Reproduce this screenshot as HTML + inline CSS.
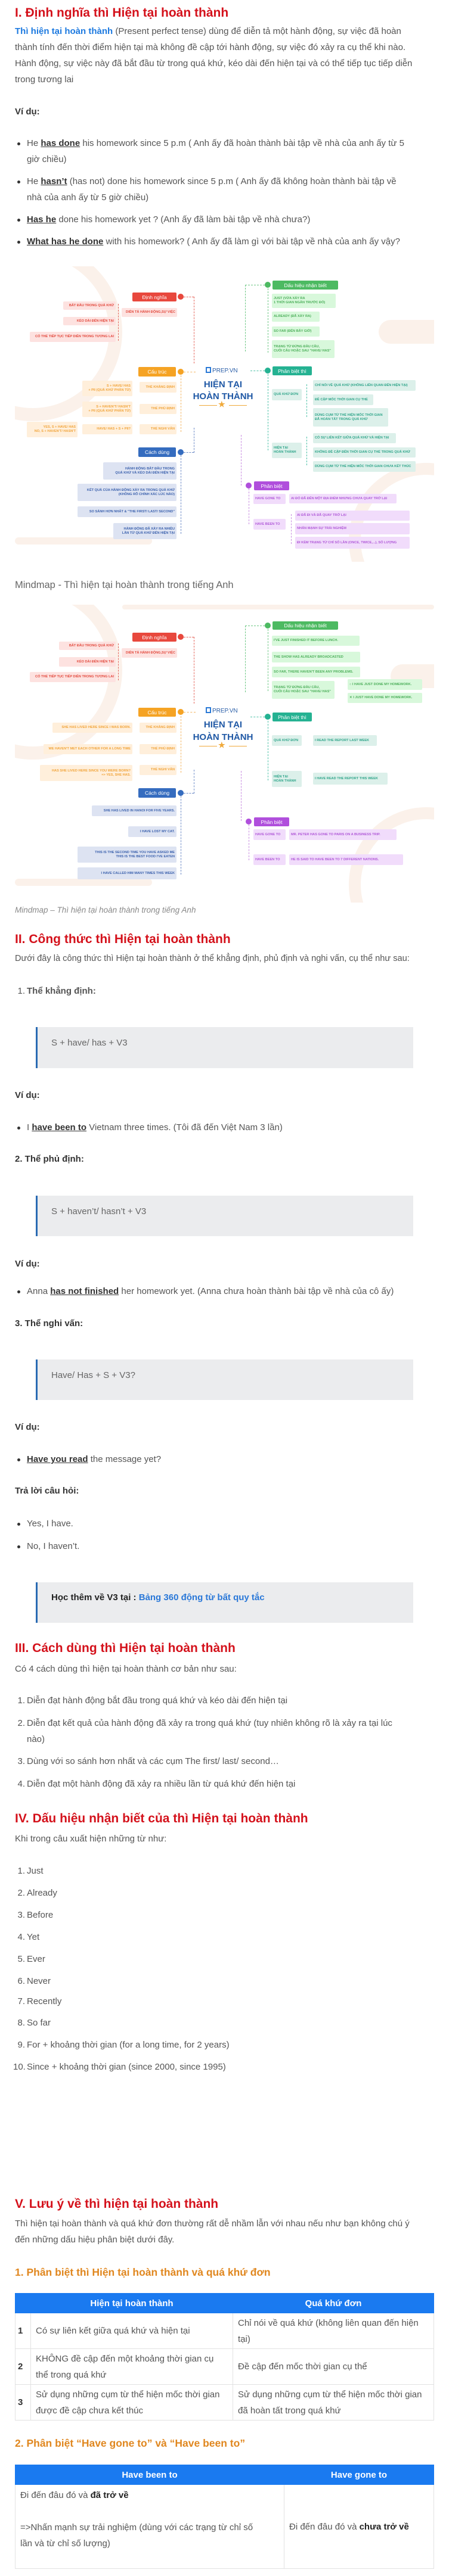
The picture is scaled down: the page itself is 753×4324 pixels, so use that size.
<!DOCTYPE html>
<html><head><meta charset="utf-8">
<style>
*{margin:0;padding:0;box-sizing:border-box}
body{width:753px;height:4324px;position:relative;background:#fff;font-family:"Liberation Sans",sans-serif;color:#555;overflow:hidden}
.a{position:absolute;left:25px;font-size:15px;line-height:27px;white-space:nowrap;color:#555}
.h2{position:absolute;left:25px;font-size:21px;line-height:28px;font-weight:bold;color:#d4111b;white-space:nowrap}
.h3{position:absolute;left:25px;font-size:17.5px;line-height:28px;font-weight:bold;color:#e0871f;white-space:nowrap}
.b{font-weight:bold;color:#333}
.u{font-weight:bold;color:#333;text-decoration:underline}
.dot{position:absolute;left:29px;width:5px;height:5px;border-radius:50%;background:#333}
.bq{position:absolute;left:60px;width:633px;background:#ebecee;border-left:3px solid #2a6bb3}
.bq span{position:absolute;left:23px;font-size:15px;line-height:27px;color:#666;white-space:nowrap}
.num{position:absolute;width:20px;text-align:right;left:22px;font-size:15px;line-height:27px;color:#555}
.li{position:absolute;left:45px;font-size:15px;line-height:27px;color:#555;white-space:nowrap}
table{position:absolute;left:25px;width:703px;border-collapse:collapse;font-size:15px;line-height:27px;color:#555}
td,th{border:1px solid #e2e2e2;vertical-align:middle}
th{background:#1a7af0;color:#fff;font-weight:bold;text-align:center;height:33px;border-color:#1a7af0}
td{padding:2px 8px}
.mm{position:absolute;left:0;width:753px}
.mm .bg{position:absolute;left:25px;top:0;width:703px;background:#fff;overflow:hidden}
.bx{position:absolute;display:flex;align-items:center;font-size:5.6px;line-height:7px;font-weight:bold;border-radius:2px;padding:0 3px;white-space:nowrap;overflow:hidden}
.R{justify-content:flex-end;text-align:right}
.L{justify-content:flex-start}
.C{justify-content:center;text-align:center}
.tt{position:absolute;display:flex;align-items:center;justify-content:center;font-size:8.5px;color:#fff;border-radius:2px;white-space:nowrap}
.pk{background:#fde2e0;color:#e2493d}
.or{background:#ffefdb;color:#f1a43a}
.bl{background:#dde3f2;color:#3b61ad}
.gr{background:#d8f8db;color:#4caf5a}
.te{background:#dcf0ea;color:#2fa58a}
.pu{background:#f1dcfb;color:#b059d8}
.cir{position:absolute;width:10px;height:10px;border-radius:50%;border:2px solid;background:#fff}
.dl{position:absolute;border:0 dashed}
.ctr{position:absolute;text-align:center;color:#1f58a5;font-weight:bold;white-space:nowrap}
</style></head><body>

<div class="h2" style="top:8px">I. Định nghĩa thì Hiện tại hoàn thành</div>
<div class="a" style="top:39px"><span style="color:#1d7ae0;font-weight:bold">Thì hiện tại hoàn thành</span> (Present perfect tense) dùng để diễn tả một hành động, sự việc đã hoàn<br>thành tính đến thời điểm hiện tại mà không đề cập tới hành động, sự việc đó xảy ra cụ thể khi nào.<br>Hành động, sự việc này đã bắt đầu từ trong quá khứ, kéo dài đến hiện tại và có thể tiếp tục tiếp diễn<br>trong tương lai</div>
<div class="a b" style="top:174px">Ví dụ:</div>
<div class="dot" style="top:239px"></div><div class="li" style="top:227px">He <span class="u">has done</span> his homework since 5 p.m ( Anh ấy đã hoàn thành bài tập về nhà của anh ấy từ 5<br>giờ chiều)</div>
<div class="dot" style="top:303px"></div><div class="li" style="top:291px">He <span class="u">hasn’t</span> (has not) done his homework since 5 p.m ( Anh ấy đã không hoàn thành bài tập về<br>nhà của anh ấy từ 5 giờ chiều)</div>
<div class="dot" style="top:367px"></div><div class="li" style="top:355px"><span class="u">Has he</span> done his homework yet ? (Anh ấy đã làm bài tập về nhà chưa?)</div>
<div class="dot" style="top:404px"></div><div class="li" style="top:392px"><span class="u">What has he done</span> with his homework? ( Anh ấy đã làm gì với bài tập về nhà của anh ấy vậy?</div>

<!-- Mindmap 1 -->
<div class="mm" style="top:447px;height:496px">
<div class="bg" style="height:496px">
<div style="position:absolute;left:-120px;top:-40px;width:300px;height:300px;border-radius:50%;border:22px solid #fbf1ea"></div>
<div style="position:absolute;left:560px;top:330px;width:260px;height:260px;border-radius:50%;border:20px solid #fbf1ea"></div>
<div style="position:absolute;left:0;top:455px;width:230px;height:12px;background:#fbf1ea;border-radius:6px"></div>
<div style="position:absolute;left:610px;top:90px;width:120px;height:40px;background:#fbf1ea;border-radius:20px"></div>
</div>
</div>
<div class="mm" style="top:450px;height:490px">
<!-- connectors -->
<div class="dl" style="left:325px;top:48px;height:112px;border-left-width:1px;border-color:#e5685e"></div>
<div class="dl" style="left:303px;top:180px;height:95px;border-left-width:1px;border-color:#f3b562"></div>
<div class="dl" style="left:303px;top:314px;height:132px;border-left-width:1px;border-color:#6d8bc7"></div>
<div class="dl" style="left:325px;top:268px;height:42px;border-left-width:1px;border-color:#6d8bc7"></div>
<div class="dl" style="left:411px;top:28px;height:112px;border-left-width:1px;border-color:#6dc784"></div>
<div class="dl" style="left:449px;top:34px;height:108px;border-left-width:1px;border-color:#6dc784"></div>
<div class="dl" style="left:449px;top:178px;height:128px;border-left-width:1px;border-color:#4fc2a8"></div>
<div class="dl" style="left:514px;top:195px;height:55px;border-left-width:1px;border-color:#4fc2a8"></div>
<div class="dl" style="left:514px;top:283px;height:48px;border-left-width:1px;border-color:#4fc2a8"></div>
<div class="dl" style="left:404px;top:280px;height:85px;border-left-width:1px;border-color:#c78ae0"></div>
<div class="dl" style="left:417px;top:370px;height:60px;border-left-width:1px;border-color:#c78ae0"></div>
<div class="dl" style="left:488px;top:413px;height:50px;border-left-width:1px;border-color:#c78ae0"></div>
<div class="dl" style="left:308px;top:48px;width:17px;border-top-width:1px;border-color:#e5685e"></div>
<div class="dl" style="left:308px;top:174px;width:20px;border-top-width:1px;border-color:#f3b562"></div>
<div class="dl" style="left:308px;top:309px;width:17px;border-top-width:1px;border-color:#6d8bc7"></div>
<div class="dl" style="left:411px;top:28px;width:33px;border-top-width:1px;border-color:#6dc784"></div>
<div class="dl" style="left:420px;top:172px;width:24px;border-top-width:1px;border-color:#4fc2a8"></div>
<div class="dl" style="left:198px;top:60px;height:62px;border-left-width:1px;border-color:#e5685e"></div>
<!-- titles -->
<div class="tt" style="left:222px;top:41px;width:74px;height:15px;background:#e8483d">Định nghĩa</div>
<div class="tt" style="left:232px;top:166px;width:63px;height:16px;background:#f5a324">Cấu trúc</div>
<div class="tt" style="left:232px;top:301px;width:63px;height:16px;background:#356cbf">Cách dùng</div>
<div class="tt" style="left:457px;top:21px;width:110px;height:15px;background:#4dba62">Dấu hiệu nhận biết</div>
<div class="tt" style="left:457px;top:165px;width:66px;height:15px;background:#25b292">Phân biệt thì</div>
<div class="tt" style="left:426px;top:358px;width:59px;height:15px;background:#b04fdc">Phân biệt</div>
<div class="cir" style="left:298px;top:43px;border-color:#e8483d;background:#e8483d"></div>
<div class="cir" style="left:298px;top:169px;border-color:#f5a324;background:#f5a324"></div>
<div class="cir" style="left:298px;top:304px;border-color:#356cbf;background:#356cbf"></div>
<div class="cir" style="left:444px;top:23px;border-color:#4dba62;background:#4dba62"></div>
<div class="cir" style="left:444px;top:167px;border-color:#25b292;background:#25b292"></div>
<div class="cir" style="left:412px;top:360px;border-color:#b04fdc;background:#b04fdc"></div>
<!-- pink -->
<div class="bx pk R" style="left:204px;top:67px;width:93px;height:15px">DIỄN TẢ HÀNH ĐỘNG,SỰ VIỆC</div>
<div class="bx pk R" style="left:106px;top:56px;width:88px;height:14px">BẮT ĐẦU TRONG QUÁ KHỨ</div>
<div class="bx pk R" style="left:106px;top:82px;width:88px;height:14px">KÉO DÀI ĐẾN HIỆN TẠI</div>
<div class="bx pk R" style="left:50px;top:107px;width:144px;height:17px">CÓ THỂ TIẾP TỤC TIẾP DIỄN TRONG TƯƠNG LAI</div>
<!-- orange -->
<div class="bx or R" style="left:234px;top:191px;width:62px;height:18px">THỂ KHẲNG ĐỊNH</div>
<div class="bx or R" style="left:138px;top:189px;width:84px;height:26px">S + HAVE/ HAS<br>+ PII (QUÁ KHỨ PHÂN TỪ)</div>
<div class="bx or R" style="left:234px;top:228px;width:62px;height:17px">THỂ PHỦ ĐỊNH</div>
<div class="bx or R" style="left:138px;top:224px;width:84px;height:26px">S + HAVEN'T/ HASN'T<br>+ PII (QUÁ KHỨ PHÂN TỪ)</div>
<div class="bx or R" style="left:234px;top:262px;width:62px;height:17px">THỂ NGHI VẤN</div>
<div class="bx or R" style="left:138px;top:262px;width:84px;height:17px">HAVE/ HAS + S + PII?</div>
<div class="bx or R" style="left:45px;top:258px;width:85px;height:26px">YES, S + HAVE/ HAS<br>NO, S + HAVEN'T/ HASN'T</div>
<!-- blue -->
<div class="bx bl R" style="left:173px;top:326px;width:123px;height:29px">HÀNH ĐỘNG BẮT ĐẦU TRONG<br>QUÁ KHỨ VÀ KÉO DÀI ĐẾN HIỆN TẠI</div>
<div class="bx bl R" style="left:130px;top:362px;width:166px;height:29px">KẾT QUẢ CỦA HÀNH ĐỘNG XẢY RA TRONG QUÁ KHỨ<br>(KHÔNG RÕ CHÍNH XÁC LÚC NÀO)</div>
<div class="bx bl R" style="left:130px;top:400px;width:166px;height:18px">SO SÁNH HƠN NHẤT &amp; "THE FIRST/ LAST/ SECOND"</div>
<div class="bx bl R" style="left:190px;top:428px;width:106px;height:27px">HÀNH ĐỘNG ĐÃ XẢY RA NHIỀU<br>LẦN TỪ QUÁ KHỨ ĐẾN HIỆN TẠI</div>
<!-- green -->
<div class="bx gr L" style="left:456px;top:43px;width:107px;height:24px">JUST (VỪA XẢY RA<br>1 THỜI GIAN NGẮN TRƯỚC ĐÓ)</div>
<div class="bx gr L" style="left:456px;top:73px;width:80px;height:17px">ALREADY (ĐÃ XẢY RA)</div>
<div class="bx gr L" style="left:456px;top:98px;width:80px;height:17px">SO FAR (ĐẾN BÂY GIỜ)</div>
<div class="bx gr L" style="left:456px;top:121px;width:105px;height:30px">TRẠNG TỪ ĐỨNG ĐẦU CÂU,<br>CUỐI CÂU HOẶC SAU "HAVE/ HAS"</div>
<!-- teal -->
<div class="bx te L" style="left:456px;top:203px;width:50px;height:19px">QUÁ KHỨ ĐƠN</div>
<div class="bx te L" style="left:525px;top:188px;width:172px;height:18px">CHỈ NÓI VỀ QUÁ KHỨ (KHÔNG LIÊN QUAN ĐẾN HIỆN TẠI)</div>
<div class="bx te L" style="left:525px;top:212px;width:101px;height:18px">ĐỀ CẬP MỐC THỜI GIAN CỤ THỂ</div>
<div class="bx te L" style="left:525px;top:235px;width:126px;height:31px">DÙNG CỤM TỪ THỂ HIỆN MỐC THỜI GIAN<br>ĐÃ HOÀN TẤT TRONG QUÁ KHỨ</div>
<div class="bx te L" style="left:456px;top:293px;width:50px;height:26px">HIỆN TẠI<br>HOÀN THÀNH</div>
<div class="bx te L" style="left:525px;top:277px;width:139px;height:17px">CÓ SỰ LIÊN KẾT GIỮA QUÁ KHỨ VÀ HIỆN TẠI</div>
<div class="bx te L" style="left:525px;top:301px;width:172px;height:17px">KHÔNG ĐỀ CẬP ĐẾN THỜI GIAN CỤ THỂ TRONG QUÁ KHỨ</div>
<div class="bx te L" style="left:525px;top:324px;width:172px;height:18px">DÙNG CỤM TỪ THỂ HIỆN MỐC THỜI GIAN CHƯA KẾT THÚC</div>
<!-- purple -->
<div class="bx pu L" style="left:425px;top:379px;width:54px;height:17px">HAVE GONE TO</div>
<div class="bx pu L" style="left:485px;top:379px;width:180px;height:16px">AI ĐÓ ĐÃ ĐẾN MỘT ĐỊA ĐIỂM NHƯNG CHƯA QUAY TRỞ LẠI</div>
<div class="bx pu L" style="left:425px;top:421px;width:54px;height:18px">HAVE BEEN TO</div>
<div class="bx pu L" style="left:495px;top:407px;width:192px;height:17px">AI ĐÃ ĐI VÀ ĐÃ QUAY TRỞ LẠI</div>
<div class="bx pu L" style="left:495px;top:428px;width:192px;height:19px">NHẤN MẠNH SỰ TRẢI NGHIỆM</div>
<div class="bx pu L" style="left:495px;top:451px;width:192px;height:20px">ĐI KÈM TRẠNG TỪ CHỈ SỐ LẦN (ONCE, TWICE,...), SỐ LƯỢNG</div>
<!-- center -->
<div class="ctr" style="left:345px;top:166px;font-size:10px;line-height:12px;color:#2a5ea8;font-weight:normal"><span style="display:inline-block;width:9px;height:10px;border:2px solid #2a79d6;vertical-align:-1px;margin-right:2px"></span>PREP.VN</div>
<div class="ctr" style="left:324px;width:100px;top:187px;font-size:15px;line-height:18px">HIỆN TẠI</div>
<div class="ctr" style="left:319px;width:110px;top:207px;font-size:15px;line-height:18px">HOÀN THÀNH</div>
<div style="position:absolute;left:334px;top:230px;width:30px;height:1px;background:#f0a93a"></div>
<div style="position:absolute;left:384px;top:230px;width:30px;height:1px;background:#f0a93a"></div>
<div class="ctr" style="left:366px;top:222px;font-size:13px;line-height:14px;color:#f0a93a">★</div>
</div>
<div class="a" style="top:968px;font-size:16.5px;line-height:28px;color:#666">Mindmap - Thì hiện tại hoàn thành trong tiếng Anh</div>

<!-- Mindmap 2 -->
<div class="mm" style="top:1015px;height:500px">
<div class="bg" style="height:500px">
<div style="position:absolute;left:-120px;top:-40px;width:300px;height:300px;border-radius:50%;border:22px solid #fbf1ea"></div>
<div style="position:absolute;left:560px;top:340px;width:260px;height:260px;border-radius:50%;border:20px solid #fbf1ea"></div>
<div style="position:absolute;left:0;top:460px;width:230px;height:12px;background:#fbf1ea;border-radius:6px"></div>
<div style="position:absolute;left:180px;top:0;width:523px;height:8px;background:#fbf1ea;border-radius:4px"></div>
<div style="position:absolute;left:630px;top:100px;width:100px;height:40px;background:#fbf1ea;border-radius:20px"></div>
</div>
</div>
<div class="mm" style="top:1000px;height:500px">
<div class="dl" style="left:325px;top:69px;height:112px;border-left-width:1px;border-color:#e5685e"></div>
<div class="dl" style="left:303px;top:202px;height:95px;border-left-width:1px;border-color:#f3b562"></div>
<div class="dl" style="left:303px;top:336px;height:132px;border-left-width:1px;border-color:#6d8bc7"></div>
<div class="dl" style="left:325px;top:292px;height:40px;border-left-width:1px;border-color:#6d8bc7"></div>
<div class="dl" style="left:411px;top:50px;height:112px;border-left-width:1px;border-color:#6dc784"></div>
<div class="dl" style="left:449px;top:56px;height:104px;border-left-width:1px;border-color:#6dc784"></div>
<div class="dl" style="left:449px;top:210px;height:100px;border-left-width:1px;border-color:#4fc2a8"></div>
<div class="dl" style="left:404px;top:294px;height:84px;border-left-width:1px;border-color:#c78ae0"></div>
<div class="dl" style="left:417px;top:384px;height:60px;border-left-width:1px;border-color:#c78ae0"></div>
<div class="dl" style="left:308px;top:69px;width:17px;border-top-width:1px;border-color:#e5685e"></div>
<div class="dl" style="left:308px;top:195px;width:20px;border-top-width:1px;border-color:#f3b562"></div>
<div class="dl" style="left:308px;top:331px;width:17px;border-top-width:1px;border-color:#6d8bc7"></div>
<div class="dl" style="left:411px;top:50px;width:33px;border-top-width:1px;border-color:#6dc784"></div>
<div class="dl" style="left:420px;top:203px;width:24px;border-top-width:1px;border-color:#4fc2a8"></div>
<div class="dl" style="left:198px;top:80px;height:62px;border-left-width:1px;border-color:#e5685e"></div>
<div class="tt" style="left:457px;top:43px;width:110px;height:14px;background:#4dba62">Dấu hiệu nhận biết</div>
<div class="tt" style="left:222px;top:62px;width:74px;height:15px;background:#e8483d">Định nghĩa</div>
<div class="tt" style="left:232px;top:188px;width:63px;height:15px;background:#f5a324">Cấu trúc</div>
<div class="tt" style="left:232px;top:323px;width:63px;height:16px;background:#356cbf">Cách dùng</div>
<div class="tt" style="left:457px;top:196px;width:66px;height:15px;background:#25b292">Phân biệt thì</div>
<div class="tt" style="left:426px;top:372px;width:59px;height:15px;background:#b04fdc">Phân biệt</div>
<div class="cir" style="left:444px;top:45px;border-color:#4dba62;background:#4dba62"></div>
<div class="cir" style="left:298px;top:64px;border-color:#e8483d;background:#e8483d"></div>
<div class="cir" style="left:298px;top:190px;border-color:#f5a324;background:#f5a324"></div>
<div class="cir" style="left:298px;top:326px;border-color:#356cbf;background:#356cbf"></div>
<div class="cir" style="left:444px;top:198px;border-color:#25b292;background:#25b292"></div>
<div class="cir" style="left:412px;top:374px;border-color:#b04fdc;background:#b04fdc"></div>
<div class="bx pk R" style="left:204px;top:88px;width:93px;height:16px">DIỄN TẢ HÀNH ĐỘNG,SỰ VIỆC</div>
<div class="bx pk R" style="left:99px;top:77px;width:95px;height:14px">BẮT ĐẦU TRONG QUÁ KHỨ</div>
<div class="bx pk R" style="left:99px;top:103px;width:95px;height:16px">KÉO DÀI ĐẾN HIỆN TẠI</div>
<div class="bx pk R" style="left:50px;top:128px;width:144px;height:17px">CÓ THỂ TIẾP TỤC TIẾP DIỄN TRONG TƯƠNG LAI</div>
<div class="bx gr L" style="left:456px;top:67px;width:147px;height:17px">I'VE JUST FINISHED IT BEFORE LUNCH.</div>
<div class="bx gr L" style="left:456px;top:94px;width:148px;height:18px">THE SHOW HAS ALREADY BROADCASTED</div>
<div class="bx gr L" style="left:456px;top:119px;width:148px;height:18px">SO FAR, THERE HAVEN'T BEEN ANY PROBLEMS.</div>
<div class="bx gr L" style="left:456px;top:143px;width:105px;height:30px">TRẠNG TỪ ĐỨNG ĐẦU CÂU,<br>CUỐI CÂU HOẶC SAU "HAVE/ HAS"</div>
<div class="bx gr L" style="left:583px;top:140px;width:125px;height:18px">○ I HAVE JUST DONE MY HOMEWORK.</div>
<div class="bx gr L" style="left:583px;top:163px;width:125px;height:17px">✕ I JUST HAVE DONE MY HOMEWORK.</div>
<div class="bx or R" style="left:234px;top:213px;width:62px;height:17px">THỂ KHẲNG ĐỊNH</div>
<div class="bx or R" style="left:88px;top:213px;width:134px;height:17px">SHE HAS LIVED HERE SINCE I WAS BORN.</div>
<div class="bx or R" style="left:234px;top:249px;width:62px;height:17px">THỂ PHỦ ĐỊNH</div>
<div class="bx or R" style="left:73px;top:249px;width:149px;height:17px">WE HAVEN'T MET EACH OTHER FOR A LONG TIME</div>
<div class="bx or R" style="left:234px;top:284px;width:62px;height:17px">THỂ NGHI VẤN</div>
<div class="bx or R" style="left:67px;top:284px;width:155px;height:27px">HAS SHE LIVED HERE SINCE YOU WERE BORN?<br>=&gt; YES, SHE HAS.</div>
<div class="bx bl R" style="left:154px;top:352px;width:142px;height:18px">SHE HAS LIVED IN HANOI FOR FIVE YEARS.</div>
<div class="bx bl R" style="left:215px;top:387px;width:81px;height:18px">I HAVE LOST MY CAT.</div>
<div class="bx bl R" style="left:130px;top:421px;width:166px;height:27px">THIS IS THE SECOND TIME YOU HAVE ASKED ME<br>THIS IS THE BEST FOOD I'VE EATEN</div>
<div class="bx bl R" style="left:130px;top:456px;width:166px;height:20px">I HAVE CALLED HIM MANY TIMES THIS WEEK</div>
<div class="bx te L" style="left:456px;top:234px;width:50px;height:18px">QUÁ KHỨ ĐƠN</div>
<div class="bx te L" style="left:525px;top:234px;width:107px;height:18px">I READ THE REPORT LAST WEEK</div>
<div class="bx te L" style="left:456px;top:294px;width:50px;height:27px">HIỆN TẠI<br>HOÀN THÀNH</div>
<div class="bx te L" style="left:525px;top:297px;width:125px;height:20px">I HAVE READ THE REPORT THIS WEEK</div>
<div class="bx pu L" style="left:425px;top:392px;width:54px;height:18px">HAVE GONE TO</div>
<div class="bx pu L" style="left:485px;top:392px;width:180px;height:18px">MR. PETER HAS GONE TO PARIS ON A BUSINESS TRIP.</div>
<div class="bx pu L" style="left:425px;top:434px;width:54px;height:18px">HAVE BEEN TO</div>
<div class="bx pu L" style="left:485px;top:434px;width:191px;height:18px">HE IS SAID TO HAVE BEEN TO 7 DIFFERENT NATIONS.</div>
<div class="ctr" style="left:345px;top:187px;font-size:10px;line-height:12px;color:#2a5ea8;font-weight:normal"><span style="display:inline-block;width:9px;height:10px;border:2px solid #2a79d6;vertical-align:-1px;margin-right:2px"></span>PREP.VN</div>
<div class="ctr" style="left:324px;width:100px;top:208px;font-size:15px;line-height:18px">HIỆN TẠI</div>
<div class="ctr" style="left:319px;width:110px;top:229px;font-size:15px;line-height:18px">HOÀN THÀNH</div>
<div style="position:absolute;left:334px;top:252px;width:30px;height:1px;background:#f0a93a"></div>
<div style="position:absolute;left:384px;top:252px;width:30px;height:1px;background:#f0a93a"></div>
<div class="ctr" style="left:366px;top:244px;font-size:13px;line-height:14px;color:#f0a93a">★</div>
</div>
<div class="a" style="top:1517px;font-size:13.5px;line-height:22px;font-style:italic;color:#8a8a8a">Mindmap – Thì hiện tại hoàn thành trong tiếng Anh</div>

<div class="h2" style="top:1563px">II. Công thức thì Hiện tại hoàn thành</div>
<div class="a" style="top:1596px;font-size:14.6px">Dưới đây là công thức thì Hiện tại hoàn thành ở thể khẳng định, phủ định và nghi vấn, cụ thể như sau:</div>
<div class="num" style="top:1650px">1.</div><div class="li b" style="top:1650px">Thể khẳng định:</div>
<div class="bq" style="top:1724px;height:69px"><span style="top:13px">S + have/ has + V3</span></div>
<div class="a b" style="top:1825px">Ví dụ:</div>
<div class="dot" style="top:1891px"></div><div class="li" style="top:1879px">I <span class="u">have been to</span> Vietnam three times. (Tôi đã đến Việt Nam 3 lần)</div>
<div class="a b" style="top:1932px">2. Thể phủ định:</div>
<div class="bq" style="top:2007px;height:68px"><span style="top:13px">S + haven’t/ hasn’t + V3</span></div>
<div class="a b" style="top:2108px">Ví dụ:</div>
<div class="dot" style="top:2166px"></div><div class="li" style="top:2154px">Anna <span class="u">has not finished</span> her homework yet. (Anna chưa hoàn thành bài tập về nhà của cô ấy)</div>
<div class="a b" style="top:2208px">3. Thể nghi vấn:</div>
<div class="bq" style="top:2282px;height:68px"><span style="top:13px">Have/ Has + S + V3?</span></div>
<div class="a b" style="top:2382px">Ví dụ:</div>
<div class="dot" style="top:2448px"></div><div class="li" style="top:2436px"><span class="u">Have you read</span> the message yet?</div>
<div class="a b" style="top:2489px">Trả lời câu hỏi:</div>
<div class="dot" style="top:2556px"></div><div class="li" style="top:2544px">Yes, I have.</div>
<div class="dot" style="top:2594px"></div><div class="li" style="top:2582px">No, I haven’t.</div>
<div class="bq" style="top:2656px;height:68px"><span style="top:12px;color:#222;font-weight:bold">Học thêm về V3 tại : <span style="position:static;color:#2a78d8">Bảng 360 động từ bất quy tắc</span></span></div>

<div class="h2" style="top:2753px">III. Cách dùng thì Hiện tại hoàn thành</div>
<div class="a" style="top:2788px">Có 4 cách dùng thì hiện tại hoàn thành cơ bản như sau:</div>
<div class="num" style="top:2841px">1.</div><div class="li" style="top:2841px">Diễn đạt hành động bắt đầu trong quá khứ và kéo dài đến hiện tại</div>
<div class="num" style="top:2879px">2.</div><div class="li" style="top:2879px">Diễn đạt kết quả của hành động đã xảy ra trong quá khứ (tuy nhiên không rõ là xảy ra tại lúc<br>nào)</div>
<div class="num" style="top:2943px">3.</div><div class="li" style="top:2943px">Dùng với so sánh hơn nhất và các cụm The first/ last/ second…</div>
<div class="num" style="top:2981px">4.</div><div class="li" style="top:2981px">Diễn đạt một hành động đã xảy ra nhiều lần từ quá khứ đến hiện tại</div>

<div class="h2" style="top:3039px">IV. Dấu hiệu nhận biết của thì Hiện tại hoàn thành</div>
<div class="a" style="top:3073px">Khi trong câu xuất hiện những từ như:</div>
<div class="num" style="top:3127px">1.</div><div class="li" style="top:3127px">Just</div>
<div class="num" style="top:3164px">2.</div><div class="li" style="top:3164px">Already</div>
<div class="num" style="top:3201px">3.</div><div class="li" style="top:3201px">Before</div>
<div class="num" style="top:3238px">4.</div><div class="li" style="top:3238px">Yet</div>
<div class="num" style="top:3275px">5.</div><div class="li" style="top:3275px">Ever</div>
<div class="num" style="top:3312px">6.</div><div class="li" style="top:3312px">Never</div>
<div class="num" style="top:3346px">7.</div><div class="li" style="top:3346px">Recently</div>
<div class="num" style="top:3382px">8.</div><div class="li" style="top:3382px">So far</div>
<div class="num" style="top:3419px">9.</div><div class="li" style="top:3419px">For + khoảng thời gian (for a long time, for 2 years)</div>
<div class="num" style="top:3456px">10.</div><div class="li" style="top:3456px">Since + khoảng thời gian (since 2000, since 1995)</div>

<div class="h2" style="top:3686px">V. Lưu ý về thì hiện tại hoàn thành</div>
<div class="a" style="top:3719px">Thì hiện tại hoàn thành và quá khứ đơn thường rất dễ nhầm lẫn với nhau nếu như bạn không chú ý<br>đến những dấu hiệu phân biệt dưới đây.</div>
<div class="h3" style="top:3800px">1. Phân biệt thì Hiện tại hoàn thành và quá khứ đơn</div>

<table style="top:3849px">
<tr><th style="width:26px"></th><th style="width:339px">Hiện tại hoàn thành</th><th>Quá khứ đơn</th></tr>
<tr style="height:60px"><td class="b" style="padding:0 4px">1</td><td>Có sự liên kết giữa quá khứ và hiện tại</td><td>Chỉ nói về quá khứ (không liên quan đến hiện<br>tại)</td></tr>
<tr style="height:60px"><td class="b" style="padding:0 4px">2</td><td>KHÔNG đề cập đến một khoảng thời gian cụ<br>thể trong quá khứ</td><td>Đề cập đến mốc thời gian cụ thể</td></tr>
<tr style="height:60px"><td class="b" style="padding:0 4px">3</td><td>Sử dụng những cụm từ thể hiện mốc thời gian<br>được đề cập chưa kết thúc</td><td>Sử dụng những cụm từ thể hiện mốc thời gian<br>đã hoàn tất trong quá khứ</td></tr>
</table>

<div class="h3" style="top:4087px">2. Phân biệt “Have gone to” và “Have been to”</div>

<table style="top:4137px">
<tr><th style="width:451px;height:32px">Have been to</th><th>Have gone to</th></tr>
<tr style="height:141px"><td style="vertical-align:top;padding-top:4px">Đi đến đâu đó và <b style="color:#222">đã trở về</b><br><br>=&gt;Nhấn mạnh sự trải nghiệm (dùng với các  trạng từ chỉ số<br>lần và từ chỉ số lượng)</td><td>Đi đến đâu đó và <b style="color:#222">chưa trở về</b></td></tr>
</table>

</body></html>
